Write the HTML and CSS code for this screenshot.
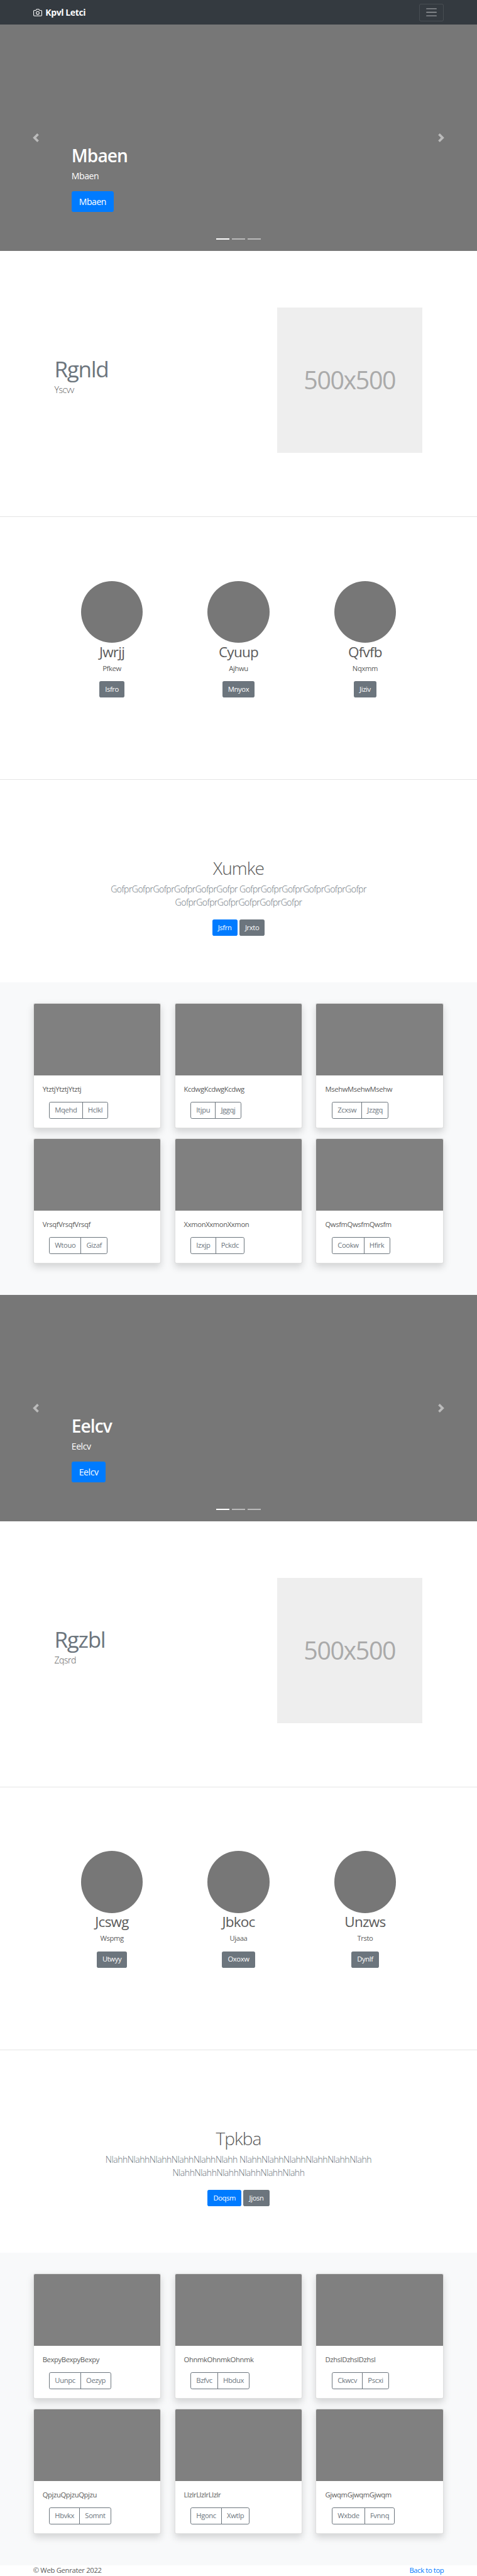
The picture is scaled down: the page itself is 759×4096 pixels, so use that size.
FILE: index.html
```html
<!DOCTYPE html>
<html lang="en">
<head>
<meta charset="utf-8">
<title>Kpvl Letci</title>
<link rel="stylesheet" href="styles.css">
</head>
<body>
<header class="navbar">
  <div class="container navbar-inner">
    <a class="brand">
      <svg class="brand-icon" viewBox="0 0 24 24" fill="none" stroke="currentColor" stroke-width="1.8" stroke-linecap="round" stroke-linejoin="round"><path d="M23 19a2 2 0 0 1-2 2H3a2 2 0 0 1-2-2V8a2 2 0 0 1 2-2h4l2-3h6l2 3h4a2 2 0 0 1 2 2z"/><circle cx="12" cy="13" r="4"/></svg>
      <strong>Kpvl Letci</strong>
    </a>
    <button class="toggler" aria-label="Menu">
      <svg class="toggler-icon" viewBox="0 0 30 30" stroke="currentColor" stroke-width="2" stroke-linecap="round"><path d="M4 7h22M4 15h22M4 23h22"/></svg>
    </button>
  </div>
</header>
<main>
  <section class="carousel">
    <div class="caption">
      <h1 class="caption-title">Mbaen</h1>
      <p class="caption-text">Mbaen</p>
      <a class="btn btn-lg btn-primary">Mbaen</a>
    </div>
    <svg class="control control-prev" viewBox="0 0 8 8"><path d="M5.25 0l-4 4 4 4 1.5-1.5L4.25 4l2.5-2.5L5.25 0z"/></svg>
    <svg class="control control-next" viewBox="0 0 8 8"><path d="M2.75 0l-1.5 1.5L3.75 4l-2.5 2.5L2.75 8l4-4-4-4z"/></svg>
    <div class="indicators"><i class="active"></i><i></i><i></i></div>
  </section>
  <section class="featurette">
    <div class="featurette-copy">
      <h2 class="featurette-title">Rgnld</h2>
      <p class="featurette-lead">Yscvv</p>
    </div>
    <div class="placeholder">500x500</div>
  </section>
  <section class="marketing">
    <div class="person"><div class="avatar"></div><h2>Jwrjj</h2><p>Pfkew</p><a class="btn btn-secondary">Isfro</a></div>
    <div class="person"><div class="avatar"></div><h2>Cyuup</h2><p>Ajhwu</p><a class="btn btn-secondary">Mnyox</a></div>
    <div class="person"><div class="avatar"></div><h2>Qfvfb</h2><p>Nqxmm</p><a class="btn btn-secondary">Jiziv</a></div>
  </section>
  <section class="intro">
    <h1>Xumke</h1>
    <p class="lead lead-tight">GofprGofprGofprGofprGofprGofpr GofprGofprGofprGofprGofprGofpr<br>GofprGofprGofprGofprGofprGofpr</p>
    <div class="actions"><a class="btn btn-primary">Jsfrn</a><a class="btn btn-secondary">Jrxto</a></div>
  </section>
  <section class="album">
    <div class="container grid">
      <article class="card"><div class="card-img"></div><div class="card-body"><p>YtztjYtztjYtztj</p><div class="group"><a>Mqehd</a><a>Hclkl</a></div></div></article>
      <article class="card"><div class="card-img"></div><div class="card-body"><p>KcdwgKcdwgKcdwg</p><div class="group"><a>Itjpu</a><a>Jggqj</a></div></div></article>
      <article class="card"><div class="card-img"></div><div class="card-body"><p>MsehwMsehwMsehw</p><div class="group"><a>Zcxsw</a><a>Jzzgq</a></div></div></article>
      <article class="card"><div class="card-img"></div><div class="card-body"><p>VrsqfVrsqfVrsqf</p><div class="group"><a>Wtouo</a><a>Gizaf</a></div></div></article>
      <article class="card"><div class="card-img"></div><div class="card-body"><p>XxmonXxmonXxmon</p><div class="group"><a>Izxjp</a><a>Pckdc</a></div></div></article>
      <article class="card"><div class="card-img"></div><div class="card-body"><p>QwsfmQwsfmQwsfm</p><div class="group"><a>Cookw</a><a>Hfirk</a></div></div></article>
    </div>
  </section>
  <section class="carousel">
    <div class="caption">
      <h1 class="caption-title">Eelcv</h1>
      <p class="caption-text">Eelcv</p>
      <a class="btn btn-lg btn-primary">Eelcv</a>
    </div>
    <svg class="control control-prev" viewBox="0 0 8 8"><path d="M5.25 0l-4 4 4 4 1.5-1.5L4.25 4l2.5-2.5L5.25 0z"/></svg>
    <svg class="control control-next" viewBox="0 0 8 8"><path d="M2.75 0l-1.5 1.5L3.75 4l-2.5 2.5L2.75 8l4-4-4-4z"/></svg>
    <div class="indicators"><i class="active"></i><i></i><i></i></div>
  </section>
  <section class="featurette">
    <div class="featurette-copy">
      <h2 class="featurette-title">Rgzbl</h2>
      <p class="featurette-lead">Zqsrd</p>
    </div>
    <div class="placeholder">500x500</div>
  </section>
  <section class="marketing">
    <div class="person"><div class="avatar"></div><h2>Jcswg</h2><p>Wspmg</p><a class="btn btn-secondary">Utwyy</a></div>
    <div class="person"><div class="avatar"></div><h2>Jbkoc</h2><p>Ujaaa</p><a class="btn btn-secondary">Oxoxw</a></div>
    <div class="person"><div class="avatar"></div><h2>Unzws</h2><p>Trsto</p><a class="btn btn-secondary">Dynlf</a></div>
  </section>
  <section class="intro">
    <h1>Tpkba</h1>
    <p class="lead">NlahhNlahhNlahhNlahhNlahhNlahh NlahhNlahhNlahhNlahhNlahhNlahh<br>NlahhNlahhNlahhNlahhNlahhNlahh</p>
    <div class="actions"><a class="btn btn-primary">Doqsm</a><a class="btn btn-secondary">Jjosn</a></div>
  </section>
  <section class="album">
    <div class="container grid">
      <article class="card"><div class="card-img"></div><div class="card-body"><p>BexpyBexpyBexpy</p><div class="group"><a>Uunpc</a><a>Oezyp</a></div></div></article>
      <article class="card"><div class="card-img"></div><div class="card-body"><p>OhnmkOhnmkOhnmk</p><div class="group"><a>Bzfvc</a><a>Hbdux</a></div></div></article>
      <article class="card"><div class="card-img"></div><div class="card-body"><p>DzhslDzhslDzhsl</p><div class="group"><a>Ckwcv</a><a>Pscxi</a></div></div></article>
      <article class="card"><div class="card-img"></div><div class="card-body"><p>QpjzuQpjzuQpjzu</p><div class="group"><a>Hbvkx</a><a>Somnt</a></div></div></article>
      <article class="card"><div class="card-img"></div><div class="card-body"><p>LlzlrLlzlrLlzlr</p><div class="group"><a>Hgonc</a><a>Xwtlp</a></div></div></article>
      <article class="card"><div class="card-img"></div><div class="card-body"><p>GjwqmGjwqmGjwqm</p><div class="group"><a>Wxbde</a><a>Fvnnq</a></div></div></article>
    </div>
  </section>
</main>
<footer class="container footer"><span>© Web Genrater 2022</span><a>Back to top</a></footer>
</body>
</html>
```

FILE: styles.css
```css
*, *::before, *::after { box-sizing: border-box; letter-spacing: -0.033em; }
html { font-size: 7.029px; }
body {
  margin: 0;
  background: #fff;
  color: #5a5a5a;
  font-family: "Open Sans", "Noto Sans", sans-serif;
  font-size: 1.6rem;
  line-height: 1.5;
  overflow-x: hidden;
}
h1, h2, p { margin: 0; }
.container { width: 96rem; margin: 0 auto; padding: 0 1.5rem; }

.navbar { height: 5.6rem; background: #343a40; }
.navbar-inner { height: 100%; display: flex; align-items: center; justify-content: space-between; }
.brand { display: flex; align-items: center; gap: 0.8rem; color: #fff; font-size: 2rem; line-height: 3rem; }
.brand strong { letter-spacing: -0.03em; }
.brand-icon { width: 2rem; height: 2rem; }
.toggler {
  width: 5.6rem; height: 4rem; padding: 0;
  display: flex; align-items: center; justify-content: center;
  background: none; border: 1px solid rgba(255,255,255,.1); border-radius: .4rem;
  color: rgba(255,255,255,.5);
}
.toggler-icon { width: 3rem; height: 3rem; }

.btn {
  display: inline-block; height: 3.8rem; padding: .7rem 1.3rem;
  border-radius: .4rem; color: #fff; line-height: 2.4rem;
}
.btn-lg { height: 4.8rem; padding: .9rem 1.7rem; border-radius: .48rem; font-size: 2rem; line-height: 3rem; }
.btn-primary { background: #007bff; }
.btn-secondary { background: #6c757d; }

.carousel { position: relative; height: 51.2rem; padding: 27.3rem 15% 0; background: #777; color: #fff; }
.caption-title { margin-bottom: .7rem; font-size: 4rem; line-height: 4.8rem; font-weight: 600; }
.caption-text { margin-bottom: 2rem; font-size: 2rem; line-height: 2.8rem; }
.caption .btn { display: table; }
.control { position: absolute; top: 24.6rem; width: 2rem; height: 2rem; fill: #fff; opacity: .5; }
.control-prev { left: 7.1rem; }
.control-next { right: 7.1rem; }
.indicators { position: absolute; left: 0; right: 0; bottom: 2.6rem; display: flex; justify-content: center; gap: .6rem; }
.indicators i { width: 3rem; height: .3rem; background: #fff; opacity: .5; }
.indicators .active { opacity: 1; }

.featurette {
  height: 60.2rem; padding: 12.8rem 12.4rem 0 12.3rem;
  display: flex; justify-content: space-between;
  border-bottom: 1px solid #e5e5e5;
}
.featurette-copy { padding-top: 11.3rem; }
.featurette-title { margin-bottom: .8rem; color: #6c757d; font-size: 5rem; line-height: 5rem; font-weight: 400; letter-spacing: -0.038em; }
.featurette-lead { font-size: 2rem; font-weight: 300; }
.placeholder {
  width: 32.9rem; height: 32.9rem;
  display: flex; align-items: center; justify-content: center;
  background: #eee; color: #aaa; font-size: 5.6rem; letter-spacing: -0.036em;
}

.marketing {
  height: 59.36rem; padding: 14.4rem 11rem 0;
  display: grid; grid-template-columns: repeat(3, 1fr);
  text-align: center; border-bottom: 1px solid #e5e5e5;
}
.avatar { width: 14rem; height: 14rem; margin: 0 auto; border-radius: 50%; background: #777; }
.person h2 { padding-top: .08rem; margin-bottom: .72rem; font-size: 3.2rem; line-height: 3.84rem; font-weight: 400; }
.person p { margin-bottom: 1.6rem; }

.intro { height: 45.82rem; padding-top: 17.7rem; text-align: center; }
.intro h1 { margin-bottom: .7rem; font-size: 4rem; line-height: 4.8rem; font-weight: 300; }
.lead { margin-bottom: 2.4rem; color: #6c757d; font-size: 2rem; line-height: 3rem; font-weight: 300; white-space: nowrap; }
.lead-tight { letter-spacing: -0.04em; }
.actions { display: flex; justify-content: center; gap: .45rem; }

.album { padding: 4.8rem 0; background: #f8f9fa; }
.grid { display: grid; grid-template-columns: repeat(3, 29rem); column-gap: 3rem; row-gap: 2.4rem; padding-bottom: 2.4rem; }
.card {
  height: 28.2rem; background: #fff;
  border: 1px solid rgba(0,0,0,.125); border-radius: .4rem; overflow: hidden;
  box-shadow: 0 .8rem 1.6rem rgba(0,0,0,.15);
}
.card-img { height: 16.2rem; background: #808080; }
.card-body { padding: 2rem; }
.card-body p { margin-bottom: 1.6rem; line-height: 2.4rem; }
.group { display: flex; margin-left: 1.5rem; color: #6c757d; }
.group a { height: 3.8rem; padding: 0 1.16rem; border: 1px solid #6c757d; line-height: 3.55rem; }
.group a:first-child { border-radius: .4rem 0 0 .4rem; }
.group a:last-child { margin-left: -1px; border-radius: 0 .4rem .4rem 0; }

.footer { display: flex; justify-content: space-between; line-height: 2.4rem; }
.footer span { letter-spacing: -0.025em; }
.footer a { color: #007bff; }
```
